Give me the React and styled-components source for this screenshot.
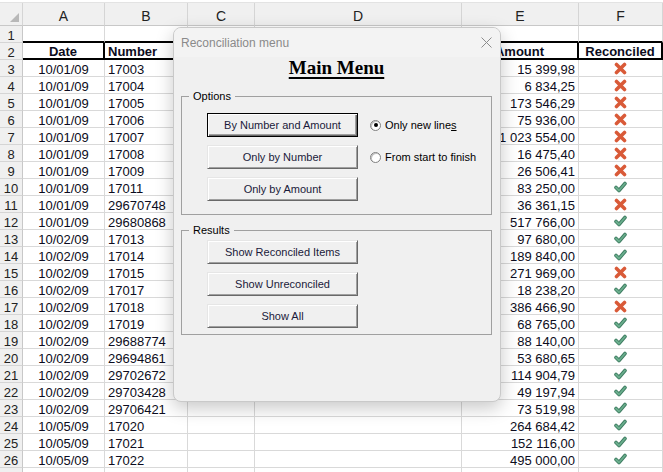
import React from "react";
import styled, { createGlobalStyle } from "styled-components";

const GlobalStyle = createGlobalStyle`
  html, body {
    margin: 0;
    padding: 0;
    background: #ffffff;
  }
  body {
    font-family: "Liberation Sans", Arial, sans-serif;
  }
`;

const rows = [
  ["10/01/09", "17003", "15 399,98", false],
  ["10/01/09", "17004", "6 834,25", false],
  ["10/01/09", "17005", "173 546,29", false],
  ["10/01/09", "17006", "75 936,00", false],
  ["10/01/09", "17007", "1 023 554,00", false],
  ["10/01/09", "17008", "16 475,40", false],
  ["10/01/09", "17009", "26 506,41", false],
  ["10/01/09", "17011", "83 250,00", true],
  ["10/01/09", "29670748", "36 361,15", false],
  ["10/01/09", "29680868", "517 766,00", true],
  ["10/02/09", "17013", "97 680,00", true],
  ["10/02/09", "17014", "189 840,00", true],
  ["10/02/09", "17015", "271 969,00", false],
  ["10/02/09", "17017", "18 238,20", true],
  ["10/02/09", "17018", "386 466,90", false],
  ["10/02/09", "17019", "68 765,00", true],
  ["10/02/09", "29688774", "88 140,00", true],
  ["10/02/09", "29694861", "53 680,65", true],
  ["10/02/09", "29702672", "114 904,79", true],
  ["10/02/09", "29703428", "49 197,94", true],
  ["10/02/09", "29706421", "73 519,98", true],
  ["10/05/09", "17020", "264 684,42", true],
  ["10/05/09", "17021", "152 116,00", true],
  ["10/05/09", "17022", "495 000,00", true],
];

const Page = styled.div`
  position: relative;
  width: 663px;
  height: 472px;
  overflow: hidden;
  background: #fff;
`;

const TopStrip = styled.div`
  height: 2px;
  background: #fff;
  border-bottom: 1px solid #e3e3e3;
`;

const Sheet = styled.div`
  display: grid;
  grid-template-columns: 23px 82px 83px 67px 207px 117px 1fr;
  grid-template-rows: 23px;
  grid-auto-rows: 17px;
`;

const ColHead = styled.div`
  box-sizing: border-box;
  background: #f0f0f0;
  border-right: 1px solid #d5d5d5;
  border-bottom: 1px solid #c8c8c8;
  font-size: 14px;
  color: #222;
  display: flex;
  align-items: center;
  justify-content: center;
  padding-top: 4px;
  position: relative;
`;

const Corner = styled(ColHead)`
  &::after {
    content: "";
    position: absolute;
    right: 3px;
    bottom: 3px;
    border-left: 9px solid transparent;
    border-bottom: 9px solid #b8b8b8;
  }
`;

const RowNum = styled.div`
  box-sizing: border-box;
  background: #f0f0f0;
  border-right: 1px solid #c8c8c8;
  border-bottom: 1px solid #d5d5d5;
  font-size: 13px;
  line-height: 15px;
  padding-top: 2px;
  color: #222;
  text-align: center;
`;

const Cell = styled.div`
  box-sizing: border-box;
  border-right: ${(p) => (p.$head ? "2px solid #000" : "1px solid #d9d9d9")};
  border-bottom: ${(p) => (p.$thick ? "2px solid #000" : "1px solid #d9d9d9")};
  font-size: 13px;
  line-height: 15px;
  font-weight: ${(p) => (p.$head ? "bold" : "normal")};
  color: #0c0c20;
  padding: ${(p) => (p.$icon ? "0 3px" : "2px 3px 0")};
  white-space: nowrap;
  overflow: hidden;
  display: flex;
  align-items: center;
  justify-content: ${(p) =>
    p.$align === "center" ? "center" : p.$align === "right" ? "flex-end" : "flex-start"};
`;

const Dialog = styled.div`
  position: absolute;
  left: 173px;
  top: 27px;
  width: 328px;
  height: 375px;
  box-sizing: border-box;
  background: #f0f0f0;
  border: 1px solid #c9c9c9;
  border-radius: 8px;
  box-shadow: 0 6px 18px rgba(0, 0, 0, 0.22);
  overflow: hidden;
  font-family: "Liberation Sans", Arial, sans-serif;
`;

const TitleBar = styled.div`
  height: 29px;
  background: #f3f3f3;
  display: flex;
  align-items: center;
  justify-content: space-between;
  padding: 0 8px 0 7px;
  font-size: 12px;
  color: #8a8a8a;
`;

const Body = styled.div`
  padding: 0 8px 0 7px;
`;

const Heading = styled.h1`
  margin: 0;
  font-family: "Liberation Serif", "Times New Roman", serif;
  font-size: 19px;
  line-height: 22px;
  font-weight: bold;
  text-align: center;
  color: #000;
  text-decoration: underline;
  text-decoration-thickness: 2px;
  text-underline-offset: 3px;
`;

const Frame = styled.fieldset`
  margin: ${(p) => p.$mt}px 0 0 0;
  padding: ${(p) => p.$pt}px 0 ${(p) => p.$pb}px 0;
  border: 1px solid #a0a0a0;
  min-width: 0;
`;

const Legend = styled.legend`
  margin-left: 7px;
  padding: 0 4px;
  font-size: 11px;
  line-height: 12px;
  color: #000;
`;

const OptionsGrid = styled.div`
  display: grid;
  grid-template-columns: 151px auto;
  grid-auto-rows: 24px;
  row-gap: 8px;
  column-gap: 12px;
  align-items: center;
  margin-left: 25px;
`;

const ButtonStack = styled.div`
  display: flex;
  flex-direction: column;
  gap: 8px;
  width: 151px;
  margin-left: 25px;
`;

const Button = styled.button`
  box-sizing: border-box;
  width: 151px;
  height: 24px;
  margin: 0;
  padding: 0;
  font-family: "Liberation Sans", Arial, sans-serif;
  font-size: 11px;
  color: #1a1a3a;
  background: #f0f0f0;
  border: 1px solid;
  border-color: ${(p) => (p.$default ? "#000" : "#e6e6e6 #696969 #696969 #e6e6e6")};
  box-shadow: ${(p) =>
    p.$default
      ? "inset 1px 1px 0 #fff, inset -1px -1px 0 #696969, inset -2px -2px 0 #a0a0a0"
      : "inset 1px 1px 0 #fff, inset -1px -1px 0 #a0a0a0"};
`;

const Radio = styled.label`
  display: flex;
  align-items: center;
  gap: 4px;
  font-size: 11px;
  color: #000;
  white-space: nowrap;
`;

const RadioDot = styled.span`
  box-sizing: border-box;
  width: 11px;
  height: 11px;
  border-radius: 50%;
  border: 1px solid #808080;
  background: #fff;
  box-shadow: inset 1px 1px 0 #c0c0c0;
  display: flex;
  align-items: center;
  justify-content: center;
  &::after {
    content: "";
    width: 4px;
    height: 4px;
    border-radius: 50%;
    background: ${(p) => (p.$on ? "#000" : "transparent")};
  }
`;

const Cross = () => (
  <svg width="13" height="13" viewBox="0 0 13 13">
    <path d="M2.5 2.5 L10.5 10.5 M10.5 2.5 L2.5 10.5" stroke="#d95a38" strokeWidth="3.6" strokeLinecap="round" />
  </svg>
);

const Check = () => (
  <svg width="13" height="12" viewBox="0 0 13 12">
    <path d="M2 6.5 L5 9.5 L11 2.5" fill="none" stroke="#3f7d62" strokeWidth="3.6" strokeLinecap="round" strokeLinejoin="round" />
    <path d="M2 6.5 L5 9.5 L11 2.5" fill="none" stroke="#6aae8d" strokeWidth="1.8" strokeLinecap="round" strokeLinejoin="round" />
  </svg>
);

const CloseIcon = () => (
  <svg width="11" height="11" viewBox="0 0 11 11">
    <path d="M0.5 0.5 L10.5 10.5 M10.5 0.5 L0.5 10.5" stroke="#8c8c8c" strokeWidth="1" />
  </svg>
);

export default function App() {
  return (
    <Page>
      <GlobalStyle />
      <TopStrip />
      <Sheet>
        <Corner />
        {["A", "B", "C", "D", "E", "F"].map((c) => (
          <ColHead key={c}>{c}</ColHead>
        ))}

        <RowNum>1</RowNum>
        {[0, 1, 2, 3, 4, 5].map((i) => (
          <Cell key={i} $thick />
        ))}

        <RowNum>2</RowNum>
        <Cell $head $thick $align="center">Date</Cell>
        <Cell $head $thick>Number</Cell>
        <Cell $head $thick />
        <Cell $head $thick />
        <Cell $head $thick $align="center">Amount</Cell>
        <Cell $head $thick $align="center">Reconciled</Cell>

        {rows.map(([date, num, amount, ok], i) => (
          <React.Fragment key={i}>
            <RowNum>{i + 3}</RowNum>
            <Cell $align="center">{date}</Cell>
            <Cell>{num}</Cell>
            <Cell />
            <Cell />
            <Cell $align="right">{amount}</Cell>
            <Cell $align="center" $icon>{ok ? <Check /> : <Cross />}</Cell>
          </React.Fragment>
        ))}
        <RowNum />
        {[0, 1, 2, 3, 4, 5].map((i) => (
          <Cell key={i} />
        ))}
      </Sheet>

      <Dialog>
        <TitleBar>
          <span>Reconciliation menu</span>
          <CloseIcon />
        </TitleBar>
        <Body>
          <Heading>Main Menu</Heading>
          <Frame $mt={11} $pt={11} $pb={13}>
            <Legend>Options</Legend>
            <OptionsGrid>
              <Button $default>By Number and Amount</Button>
              <Radio>
                <RadioDot $on />
                <span>
                  Only new line<u>s</u>
                </span>
              </Radio>
              <Button>Only by Number</Button>
              <Radio>
                <RadioDot />
                <span>From start to finish</span>
              </Radio>
              <Button>Only by Amount</Button>
            </OptionsGrid>
          </Frame>
          <Frame $mt={9} $pt={4} $pb={6}>
            <Legend>Results</Legend>
            <ButtonStack>
              <Button>Show Reconciled Items</Button>
              <Button>Show Unreconciled</Button>
              <Button>Show All</Button>
            </ButtonStack>
          </Frame>
        </Body>
      </Dialog>
    </Page>
  );
}
